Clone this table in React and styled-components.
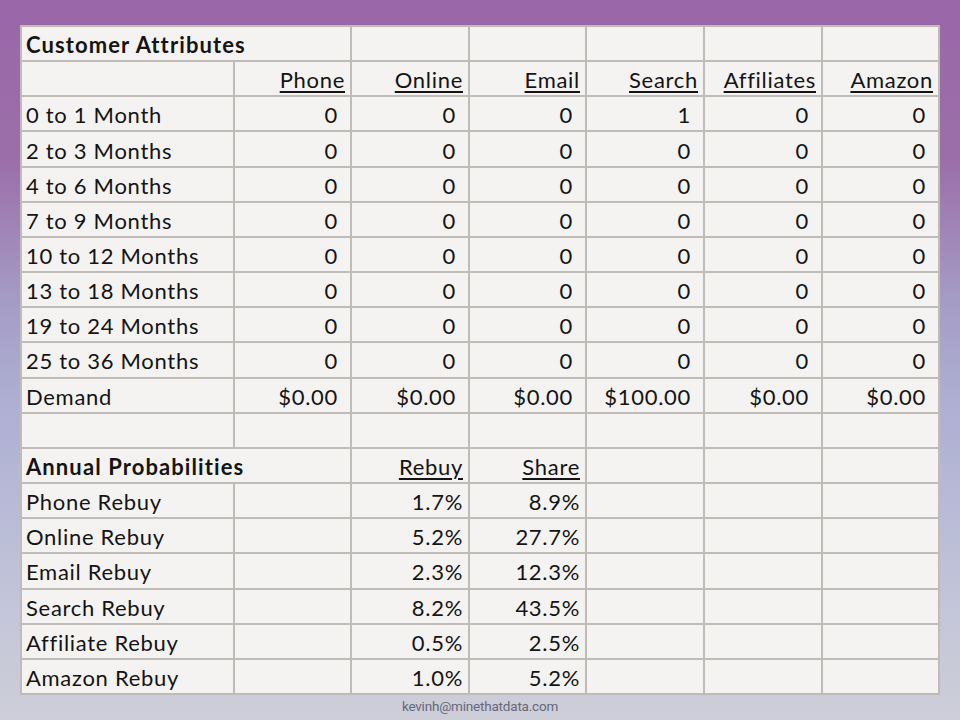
import React from "react";
import styled, { createGlobalStyle } from "styled-components";

const GlobalStyle = createGlobalStyle`
  html, body {
    margin: 0;
    padding: 0;
  }
  body {
    font-family: Lato, "Open Sans", sans-serif;
  }
`;

const channels = ["Phone", "Online", "Email", "Search", "Affiliates", "Amazon"];

const tenure = [
  ["0 to 1 Month", [0, 0, 0, 1, 0, 0]],
  ["2 to 3 Months", [0, 0, 0, 0, 0, 0]],
  ["4 to 6 Months", [0, 0, 0, 0, 0, 0]],
  ["7 to 9 Months", [0, 0, 0, 0, 0, 0]],
  ["10 to 12 Months", [0, 0, 0, 0, 0, 0]],
  ["13 to 18 Months", [0, 0, 0, 0, 0, 0]],
  ["19 to 24 Months", [0, 0, 0, 0, 0, 0]],
  ["25 to 36 Months", [0, 0, 0, 0, 0, 0]],
];

const demand = ["$0.00", "$0.00", "$0.00", "$100.00", "$0.00", "$0.00"];

const rebuys = [
  ["Phone Rebuy", "1.7%", "8.9%"],
  ["Online Rebuy", "5.2%", "27.7%"],
  ["Email Rebuy", "2.3%", "12.3%"],
  ["Search Rebuy", "8.2%", "43.5%"],
  ["Affiliate Rebuy", "0.5%", "2.5%"],
  ["Amazon Rebuy", "1.0%", "5.2%"],
];

const App = () => {
  return (
    <Page>
      <GlobalStyle />
      <Sheet>
        <Cell span={2} bold>Customer Attributes</Cell>
        {channels.slice(1).map((c) => (
          <Cell key={"t" + c} />
        ))}

        <Cell />
        {channels.map((c) => (
          <Cell key={c} right tight>
            <Heading>{c}</Heading>
          </Cell>
        ))}

        {tenure.map(([label, values]) => (
          <React.Fragment key={label}>
            <Cell>{label}</Cell>
            {values.map((v, i) => (
              <Cell key={i} right>
                {v}
              </Cell>
            ))}
          </React.Fragment>
        ))}

        <Cell>Demand</Cell>
        {demand.map((d, i) => (
          <Cell key={"d" + i} right>
            {d}
          </Cell>
        ))}

        {Array.from({ length: 7 }).map((_, i) => (
          <Cell key={"e" + i} />
        ))}

        <Cell span={2} bold>Annual Probabilities</Cell>
        <Cell right tight>
          <Heading>Rebuy</Heading>
        </Cell>
        <Cell right tight>
          <Heading>Share</Heading>
        </Cell>
        <Cell />
        <Cell />
        <Cell />

        {rebuys.map(([label, rate, share]) => (
          <React.Fragment key={label}>
            <Cell>{label}</Cell>
            <Cell />
            <Cell right tight>{rate}</Cell>
            <Cell right tight>{share}</Cell>
            <Cell />
            <Cell />
            <Cell />
          </React.Fragment>
        ))}
      </Sheet>
      <Footer>kevinh@minethatdata.com</Footer>
    </Page>
  );
};

const Page = styled.div`
  width: 960px;
  height: 720px;
  box-sizing: border-box;
  padding: 25px 20px 0 20px;
  display: flex;
  flex-direction: column;
  align-items: center;
  background: linear-gradient(
    to bottom,
    #9a67a8 0%,
    #9b6ea9 22%,
    #a59cc6 42%,
    #adaed2 55%,
    #b9bcd7 72%,
    #c6c8d9 88%,
    #cdced8 100%
  );
`;

const Sheet = styled.div`
  width: 920px;
  height: 670px;
  box-sizing: border-box;
  padding: 2px;
  display: grid;
  grid-template-columns: 211px 115px 116px 115px 116px 116px 115px;
  grid-template-rows: repeat(19, 1fr);
  gap: 2px;
  background: #bfbbb7;
`;

const Cell = styled.div`
  grid-column: span ${(p) => p.span || 1};
  background: #f4f3f1;
  display: flex;
  align-items: center;
  justify-content: ${(p) => (p.right ? "flex-end" : "flex-start")};
  padding: 2px ${(p) => (p.right ? (p.tight ? "5px" : "12px") : "0")} 0
    ${(p) => (p.right ? "0" : "4px")};
  font-size: 22px;
  letter-spacing: ${(p) => (p.bold ? "1.1px" : "0.7px")};
  font-weight: ${(p) => (p.bold ? 700 : 400)};
  color: #141414;
  white-space: nowrap;
  overflow: hidden;
`;

const Heading = styled.span`
  text-decoration: underline;
  text-decoration-thickness: 2px;
  text-underline-offset: 3px;
`;

const Footer = styled.div`
  margin-top: 3px;
  font-family: Roboto, "Liberation Sans", sans-serif;
  font-size: 13.5px;
  letter-spacing: -0.2px;
  color: #676778;
`;

export default App;
